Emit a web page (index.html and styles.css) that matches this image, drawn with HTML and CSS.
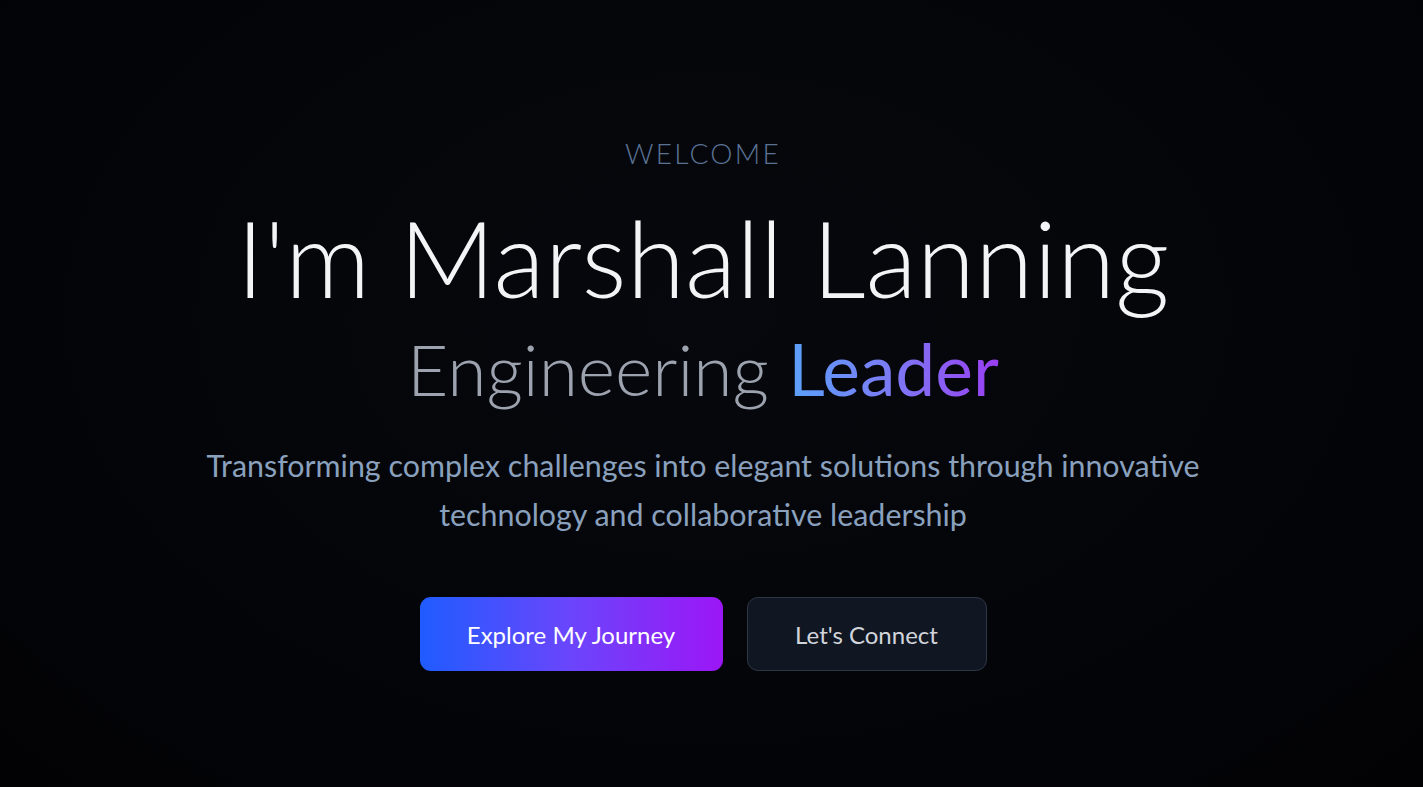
FILE: index.html
```html
<!DOCTYPE html>
<html lang="en">
<head>
<meta charset="utf-8">
<title>Marshall Lanning</title>
<link rel="stylesheet" href="styles.css">
</head>
<body>
<main class="hero">
  <div class="hero-inner">
    <p class="eyebrow">WELCOME</p>
    <h1 class="title">I'm Marshall Lanning</h1>
    <h2 class="subtitle">Engineering <span class="accent">Leader</span></h2>
    <p class="lead">Transforming complex challenges into elegant solutions through innovative technology and collaborative leadership</p>
    <div class="actions">
      <a class="btn btn-primary" href="#journey">Explore My Journey</a>
      <a class="btn btn-secondary" href="#connect">Let's Connect</a>
    </div>
  </div>
</main>
</body>
</html>
```
FILE: styles.css
```css
* { box-sizing: border-box; }
html, body { margin: 0; padding: 0; }
body {
  background: radial-gradient(ellipse at 50% 40%, #07080d 0%, #040509 60%, #020204 100%);
  min-height: 100vh;
  font-family: "Lato", "Open Sans", sans-serif;
  color: #f3f4f6;
}
.hero {
  min-height: 787px;
  display: flex;
  justify-content: center;
  padding-right: 17px;
}
.hero-inner {
  display: flex;
  flex-direction: column;
  align-items: center;
  text-align: center;
  padding-top: 135px;
}
.eyebrow {
  margin: 0;
  font-size: 28px;
  font-weight: 300;
  letter-spacing: 0.08em;
  color: #5a7395;
  line-height: 36px;
}
.title {
  margin: 30px 0 0;
  font-size: 106px;
  font-weight: 300;
  line-height: 112px;
  color: #f3f4f6;
}
.subtitle {
  margin: 8px 0 0;
  font-size: 71.3px;
  font-weight: 300;
  line-height: 96px;
  color: #9ca3af;
}
.accent {
  background: linear-gradient(90deg, #5aa2fb 0%, #7c79f4 50%, #9a3ef2 100%);
  -webkit-background-clip: text;
  background-clip: text;
  color: transparent;
  font-weight: 400;
}
.lead {
  margin: 24px 0 0;
  max-width: 1024px;
  font-size: 30.4px;
  line-height: 49px;
  font-weight: 400;
  color: #8aa1be;
}
.actions {
  display: flex;
  gap: 24px;
  margin-top: 58px;
}
.btn {
  display: flex;
  align-items: center;
  justify-content: center;
  height: 74px;
  padding: 0 40px;
  border-radius: 11px;
  font-size: 24px;
  text-decoration: none;
  font-weight: 400;
}
.btn-primary {
  color: #ffffff;
  background: linear-gradient(90deg, #1f5cff 0%, #6b45fb 50%, #9c16f6 100%);
  width: 303px;
}
.btn-secondary {
  color: #d1d5db;
  background: #111722;
  border: 1px solid #2e3746;
  width: 240px;
}
```
